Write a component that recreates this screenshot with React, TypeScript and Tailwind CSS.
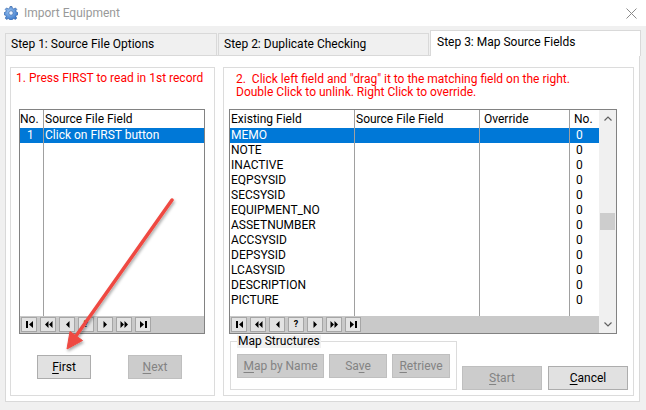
import React from "react";

const FIELDS = [
  "MEMO",
  "NOTE",
  "INACTIVE",
  "EQPSYSID",
  "SECSYSID",
  "EQUIPMENT_NO",
  "ASSETNUMBER",
  "ACCSYSID",
  "DEPSYSID",
  "LCASYSID",
  "DESCRIPTION",
  "PICTURE",
];

const NAV = ["first", "prevPage", "prev", "help", "next", "nextPage", "last"];

function NavGlyph({ kind }: { kind: string }) {
  if (kind === "help") {
    return <span className="text-[9px] font-bold leading-[9px]">?</span>;
  }
  const paths: Record<string, React.ReactNode> = {
    first: (
      <>
        <rect x="1" y="0" width="2" height="7" />
        <path d="M8 0 L4 3.5 L8 7Z" />
      </>
    ),
    prevPage: <path d="M4.5 0 L1 3.5 L4.5 7Z M8.5 0 L5 3.5 L8.5 7Z" />,
    prev: <path d="M6.5 0 L3 3.5 L6.5 7Z" />,
    next: <path d="M2.5 0 L6 3.5 L2.5 7Z" />,
    nextPage: <path d="M0.5 0 L4 3.5 L0.5 7Z M4.5 0 L8 3.5 L4.5 7Z" />,
    last: (
      <>
        <path d="M1 0 L5 3.5 L1 7Z" />
        <rect x="6" y="0" width="2" height="7" />
      </>
    ),
  };
  return (
    <svg width="9" height="7" viewBox="0 0 9 7" fill="#000">
      {paths[kind]}
    </svg>
  );
}

function NavBar() {
  return (
    <div className="flex h-[17px] gap-[3px] bg-[#c9c9c9] pl-[1px] pt-[1px]">
      {NAV.map((k) => (
        <div
          key={k}
          className="flex h-[15px] w-[16px] items-center justify-center border border-[#a6a6a6] bg-[#e3e3e3]"
        >
          <NavGlyph kind={k} />
        </div>
      ))}
    </div>
  );
}

function Chevron({ up }: { up?: boolean }) {
  return (
    <svg width="8" height="5" viewBox="0 0 8 5">
      <polyline
        points={up ? "0.5,4.5 4,1 7.5,4.5" : "0.5,0.5 4,4 7.5,0.5"}
        fill="none"
        stroke="#606060"
        strokeWidth="1.2"
      />
    </svg>
  );
}

function Btn({
  pre = "",
  u,
  post,
  w,
  disabled,
}: {
  pre?: string;
  u: string;
  post: string;
  w: string;
  disabled?: boolean;
}) {
  return (
    <div
      className={`flex h-[24px] shrink-0 items-center justify-center border ${w} ${
        disabled
          ? "border-[#bfbfbf] bg-[#cccccc] text-[#838383]"
          : "border-[#adadad] bg-[#e1e1e1] text-black"
      }`}
    >
      <span>
        {pre}
        <span className="underline underline-offset-2">{u}</span>
        {post}
      </span>
    </div>
  );
}

export default function App() {
  return (
    <div className="relative h-[410px] w-[646px] overflow-hidden bg-[#f0f0f0] font-[Roboto,'Liberation_Sans',sans-serif] text-[12px] leading-[15px] text-black">
      {/* Title bar */}
      <div className="flex h-[26px] items-center bg-white">
        <svg className="ml-[4px]" width="14" height="14" viewBox="0 0 14 14">
          <defs>
            <radialGradient id="gear" cx="0.4" cy="0.35" r="0.7">
              <stop offset="0" stopColor="#9cc4f2" />
              <stop offset="1" stopColor="#2f6fc4" />
            </radialGradient>
          </defs>
          <g fill="url(#gear)" stroke="#2a5aa0" strokeWidth="0.6">
            <path d="M6 0.5h2l0.4 1.7 1.5 0.7 1.5-1 1.4 1.4-1 1.5 0.7 1.5 1.7 0.4v2l-1.7 0.4-0.7 1.5 1 1.5-1.4 1.4-1.5-1-1.5 0.7-0.4 1.7h-2l-0.4-1.7-1.5-0.7-1.5 1-1.4-1.4 1-1.5-0.7-1.5-1.7-0.4v-2l1.7-0.4 0.7-1.5-1-1.5 1.4-1.4 1.5 1 1.5-0.7z" />
          </g>
          <circle cx="7" cy="7" r="2.2" fill="#e8f2ff" stroke="#2a5aa0" strokeWidth="0.6" />
        </svg>
        <span className="ml-[6px] text-[#999999]">Import Equipment</span>
        <svg className="ml-auto mr-[9px]" width="11" height="11" viewBox="0 0 11 11">
          <path d="M0.5 0.5 L10.5 10.5 M10.5 0.5 L0.5 10.5" stroke="#8a8a8a" strokeWidth="1" />
        </svg>
      </div>

      {/* Tabs */}
      <div className="mt-[4px] flex h-[25px] items-end pl-[5px]">
        <div className="flex h-[22px] w-[212px] items-center border border-b-0 border-[#d9d9d9] pl-[5px]">
          Step 1: Source File Options
        </div>
        <div className="ml-[1px] flex h-[22px] w-[211px] items-center border border-b-0 border-[#d9d9d9] pl-[5px]">
          Step 2: Duplicate Checking
        </div>
        <div className="relative z-10 -mb-px ml-[1px] h-[26px] w-[211px] border border-b-0 border-[#d9d9d9] bg-white pl-[6px] pt-[4px]">
          Step 3: Map Source Fields
        </div>
      </div>

      {/* Tab page */}
      <div className="ml-[5px] flex h-[347px] w-[635px] gap-[8px] border border-[#d9d9d9] bg-white pl-[4px] pt-[11px]">
        {/* Left group */}
        <div className="flex h-[329px] w-[205px] flex-col border border-[#dcdcdc]">
          <p className="ml-[5px] mt-[3px] leading-[14px] text-[#ff0000]">
            1. Press FIRST to read in 1st record
          </p>
          <div className="ml-[8px] mt-[24px] flex h-[225px] w-[186px] flex-col border border-[#828282] bg-white">
            <div className="flex flex-1">
              <div className="w-[24px] border-r border-[#a0a0a0]">
                <div className="h-[18px] pt-[2px]">No.</div>
                <div className="h-[15px] bg-[#0078d7] pl-[7px] text-white">1</div>
              </div>
              <div className="flex-1">
                <div className="h-[18px] pl-[1px] pt-[2px]">Source File Field</div>
                <div className="h-[15px] bg-[#0078d7] pl-[1px] text-white">Click on FIRST button</div>
              </div>
            </div>
            <NavBar />
          </div>
          <div className="ml-[26px] mt-[21px] flex gap-[37px]">
            <Btn u="F" post="irst" w="w-[54px]" />
            <Btn u="N" post="ext" w="w-[54px]" disabled />
          </div>
        </div>

        {/* Right group */}
        <div className="flex h-[329px] w-[411px] flex-col border border-[#dcdcdc]">
          <p className="ml-[12px] mt-[5px] leading-[13px] text-[#ff0000]">
            2.&nbsp; Click left field and "drag" it to the matching field on the right.
            <br />
            Double Click to unlink. Right Click to override.
          </p>
          <div className="ml-[5px] mt-[10px] flex h-[225px] w-[388px] border border-[#828282] bg-white">
            <div className="flex flex-1 flex-col">
              <div className="flex flex-1">
                <div className="w-[125px] border-r border-[#a0a0a0]">
                  <div className="h-[18px] pl-[1px] pt-[2px]">Existing Field</div>
                  {FIELDS.map((f, i) => (
                    <div
                      key={f}
                      className={`h-[15px] pl-[1px] ${i === 0 ? "bg-[#0078d7] text-white" : ""}`}
                    >
                      {f}
                    </div>
                  ))}
                </div>
                <div className="w-[125px] border-r border-[#a0a0a0]">
                  <div className="h-[18px] pl-[1px] pt-[2px]">Source File Field</div>
                  <div className="h-[15px] bg-[#0078d7]" />
                </div>
                <div className="w-[90px] border-r border-[#a0a0a0]">
                  <div className="h-[18px] pl-[4px] pt-[2px]">Override</div>
                  <div className="h-[15px] bg-[#0078d7]" />
                </div>
                <div className="flex-1">
                  <div className="h-[18px] pl-[4px] pt-[2px]">No.</div>
                  {FIELDS.map((f, i) => (
                    <div
                      key={f}
                      className={`h-[15px] pl-[6px] ${i === 0 ? "bg-[#0078d7] text-white" : ""}`}
                    >
                      0
                    </div>
                  ))}
                </div>
              </div>
              <NavBar />
            </div>
            {/* Scrollbar */}
            <div className="flex w-[17px] flex-col bg-[#f0f0f0]">
              <div className="flex h-[17px] items-center justify-center">
                <Chevron up />
              </div>
              <div className="flex-1">
                <div className="mx-[1px] mt-[86px] h-[17px] bg-[#cdcdcd]" />
              </div>
              <div className="flex h-[17px] items-center justify-center">
                <Chevron />
              </div>
            </div>
          </div>
          <div className="flex items-start">
            <fieldset className="ml-[6px] mt-[1px] h-[55px] w-[227px] border border-[#dcdcdc] pl-[6px]">
              <legend className="bg-[#f0f0f0] px-[1px] leading-[13px]">Map Structures</legend>
              <div className="mt-[6px] flex gap-[5px]">
                <Btn u="M" post="ap by Name" w="w-[87px]" disabled />
                <Btn pre="Sa" u="v" post="e" w="w-[58px]" disabled />
                <Btn u="R" post="etrieve" w="w-[58px]" disabled />
              </div>
            </fieldset>
            <div className="ml-[5px] mt-[32px] flex gap-[6px]">
              <Btn u="S" post="tart" w="w-[80px]" disabled />
              <Btn u="C" post="ancel" w="w-[80px]" />
            </div>
          </div>
        </div>
      </div>

      {/* Annotation arrow */}
      <svg className="pointer-events-none absolute left-0 top-0" width="646" height="410">
        <defs>
          <filter id="shadow" x="-20%" y="-20%" width="140%" height="140%">
            <feDropShadow dx="1" dy="2" stdDeviation="1.5" floodColor="#000" floodOpacity="0.35" />
          </filter>
        </defs>
        <g filter="url(#shadow)" fill="#ef4a42" stroke="#ef4a42">
          <line x1="172" y1="200" x2="76" y2="336" strokeWidth="3.5" strokeLinecap="round" />
          <polygon points="67,349 82.5,340.5 70,331.5" strokeWidth="1" strokeLinejoin="round" />
        </g>
      </svg>
    </div>
  );
}
